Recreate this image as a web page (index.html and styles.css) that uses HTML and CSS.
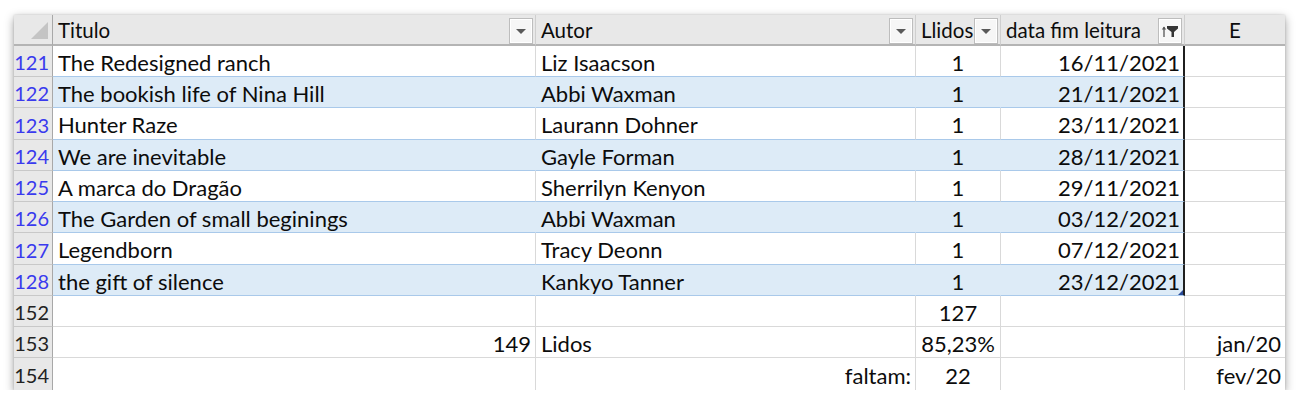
FILE: index.html
```html
<!DOCTYPE html>
<html lang="pt">
<head>
<meta charset="utf-8">
<title>Leituras</title>
<link rel="stylesheet" href="styles.css">
</head>
<body>
<div class="sheet">
  <div class="row head">
    <div class="cell corner"><span class="corner-tri"></span></div>
    <div class="cell hcell"><span>Titulo</span><span class="dd"><span class="tri"></span></span></div>
    <div class="cell hcell"><span>Autor</span><span class="dd"><span class="tri"></span></span></div>
    <div class="cell hcell"><span>Llidos</span><span class="dd"><span class="tri"></span></span></div>
    <div class="cell hcell"><span>data fim leitura</span><span class="dd filt">
      <svg width="18" height="14" viewBox="0 0 18 14"><path d="M3 3 L3 13" stroke="#555" stroke-width="1.3"/><path d="M0.8 5.5 L3 2.5 L5.2 5.5 Z" fill="#555"/><path d="M6 2 H17 V4.5 L13 8 V13 H10.5 V8 L6 4.5 Z" fill="#333"/></svg>
    </span></div>
    <div class="cell hcell col-e">E</div>
  </div>

  <div class="row t r31">
    <div class="cell rh blue">121</div>
    <div class="cell l">The Redesigned ranch</div>
    <div class="cell l">Liz Isaacson</div>
    <div class="cell c">1</div>
    <div class="cell r dcol">16/11/2021</div>
    <div class="cell ecol"></div>
  </div>
  <div class="row t band r31">
    <div class="cell rh blue">122</div>
    <div class="cell l">The bookish life of Nina Hill</div>
    <div class="cell l">Abbi Waxman</div>
    <div class="cell c">1</div>
    <div class="cell r dcol">21/11/2021</div>
    <div class="cell ecol"></div>
  </div>
  <div class="row t r32">
    <div class="cell rh blue">123</div>
    <div class="cell l">Hunter Raze</div>
    <div class="cell l">Laurann Dohner</div>
    <div class="cell c">1</div>
    <div class="cell r dcol">23/11/2021</div>
    <div class="cell ecol"></div>
  </div>
  <div class="row t band r31">
    <div class="cell rh blue">124</div>
    <div class="cell l">We are inevitable</div>
    <div class="cell l">Gayle Forman</div>
    <div class="cell c">1</div>
    <div class="cell r dcol">28/11/2021</div>
    <div class="cell ecol"></div>
  </div>
  <div class="row t r31">
    <div class="cell rh blue">125</div>
    <div class="cell l">A marca do Dragão</div>
    <div class="cell l">Sherrilyn Kenyon</div>
    <div class="cell c">1</div>
    <div class="cell r dcol">29/11/2021</div>
    <div class="cell ecol"></div>
  </div>
  <div class="row t band r31">
    <div class="cell rh blue">126</div>
    <div class="cell l">The Garden of small beginings</div>
    <div class="cell l">Abbi Waxman</div>
    <div class="cell c">1</div>
    <div class="cell r dcol">03/12/2021</div>
    <div class="cell ecol"></div>
  </div>
  <div class="row t r32">
    <div class="cell rh blue">127</div>
    <div class="cell l">Legendborn</div>
    <div class="cell l">Tracy Deonn</div>
    <div class="cell c">1</div>
    <div class="cell r dcol">07/12/2021</div>
    <div class="cell ecol"></div>
  </div>
  <div class="row t band r31">
    <div class="cell rh blue">128</div>
    <div class="cell l">the gift of silence</div>
    <div class="cell l">Kankyo Tanner</div>
    <div class="cell c">1</div>
    <div class="cell r dcol last">23/12/2021<span class="handle"></span></div>
    <div class="cell ecol"></div>
  </div>

  <div class="row p r31">
    <div class="cell rh">152</div>
    <div class="cell l"></div>
    <div class="cell l"></div>
    <div class="cell c">127</div>
    <div class="cell r"></div>
    <div class="cell r"></div>
  </div>
  <div class="row p r31">
    <div class="cell rh">153</div>
    <div class="cell r">149</div>
    <div class="cell l">Lidos</div>
    <div class="cell c">85,23%</div>
    <div class="cell r"></div>
    <div class="cell r">jan/20</div>
  </div>
  <div class="row p r32 lastrow">
    <div class="cell rh">154</div>
    <div class="cell r"></div>
    <div class="cell r">faltam:</div>
    <div class="cell c">22</div>
    <div class="cell r"></div>
    <div class="cell r">fev/20</div>
  </div>
</div>
</body>
</html>
```

FILE: styles.css
```css
html, body {
  margin: 0;
  padding: 0;
  background: #ffffff;
}

body {
  padding: 15px 0 0 14px;
  font-family: "Lato", "Liberation Sans", sans-serif;
  font-size: 22px;
  color: #0c0c0c;
}

.sheet {
  width: 1271px;
  background: #ffffff;
  box-shadow: 0 3px 9px rgba(0, 0, 0, 0.38), 0 0 2px rgba(0, 0, 0, 0.15);
}

.row {
  display: grid;
  grid-template-columns: 39px 483px 380px 85px 184px 100px;
}

.r31 { height: 31px; }
.r32 { height: 32px; }
.head { height: 31px; }

.cell {
  box-sizing: border-box;
  border-right: 1px solid #d9d9d9;
  border-bottom: 1px solid #d9d9d9;
  display: flex;
  align-items: center;
  padding: 2px 5px 0 5px;
  white-space: nowrap;
  overflow: hidden;
  position: relative;
}

.cell.l { justify-content: flex-start; }
.cell.c { justify-content: center; }
.cell.r { justify-content: flex-end; padding-right: 4px; }

/* header row */
.head .cell {
  background: #e8e8e8;
  border-bottom: 2px solid #b4b4b4;
  border-right: 1px solid #cfcfcf;
  font-size: 20.5px;
}

.hcell {
  justify-content: space-between;
  padding: 0 2px 0 5px;
  align-items: stretch;
}

.hcell > span:first-child {
  display: flex;
  align-items: center;
  padding-top: 1px;
}

.hcell.col-e {
  justify-content: center;
  align-items: center;
  padding: 1px 0 0 0;
  border-right: none;
}

.corner {
  padding: 0;
  border-right: 1px solid #a8a8a8 !important;
}

.corner-tri {
  position: absolute;
  right: 4px;
  bottom: 5px;
  width: 0;
  height: 0;
  border-left: 17px solid transparent;
  border-bottom: 17px solid #c4c4c4;
}

.dd {
  box-sizing: border-box;
  width: 24px;
  height: 26px;
  margin-top: 3px;
  border: 1px solid #bdbdbd;
  background: #f6f6f6;
  box-shadow: inset 0 0 0 1px #ffffff;
  display: flex;
  align-items: center;
  justify-content: center;
  align-self: flex-end;
  flex-shrink: 0;
}

.tri {
  width: 0;
  height: 0;
  border-left: 5px solid transparent;
  border-right: 5px solid transparent;
  border-top: 5px solid #595959;
  margin-top: 1px;
}

.filt svg { display: block; }

/* row headers */
.rh {
  background: #e8e8e8;
  justify-content: flex-end;
  padding-right: 3px;
  padding-left: 0;
  border-right: 1px solid #a8a8a8;
  border-bottom: 1px solid #c8c8c8;
  color: #222222;
  font-size: 20px;
  overflow: visible;
}

.rh.blue { color: #3a3aee; }

/* table rows */
.t .cell:not(.rh):not(.ecol) {
  border-bottom: 1px solid #a9c9ea;
}

.band .cell:not(.rh):not(.ecol) {
  background: #ddebf7;
  border-right-color: #ddebf7;
}

.t .dcol {
  border-right: 2px solid #1f1f1f !important;
  padding-right: 3px;
}

.handle {
  position: absolute;
  right: 0;
  bottom: 0;
  width: 0;
  height: 0;
  border-left: 5px solid transparent;
  border-bottom: 5px solid #2a4c9a;
}

.ecol { border-right: none; }
.p .cell:last-child { border-right: none; }
.lastrow .cell { border-bottom: none; }
```
